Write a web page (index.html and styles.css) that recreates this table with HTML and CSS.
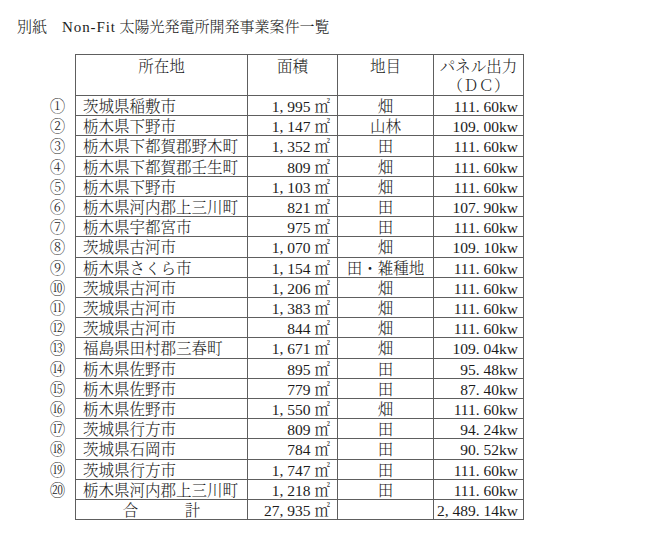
FILE: index.html
```html
<!DOCTYPE html>
<html lang="ja">
<head>
<meta charset="utf-8">
<title>別紙 Non-Fit 太陽光発電所開発事業案件一覧</title>
<link rel="stylesheet" href="styles.css">
</head>
<body>
<h1 class="title">別紙　<span class="latin">Non-Fit</span> 太陽光発電所開発事業案件一覧</h1>
<table class="list">
  <thead>
    <tr class="head">
      <th class="no"></th>
      <th class="loc">所在地</th>
      <th class="area">面積</th>
      <th class="cat">地目</th>
      <th class="pow">パネル出力<br>（ＤＣ）</th>
    </tr>
  </thead>
  <tbody>
    <tr><td class="no">①</td><td class="loc">茨城県稲敷市</td><td class="area">1<span class="c">,</span>995 ㎡</td><td class="cat">畑</td><td class="pow">111<span class="c">.</span>60kw</td></tr>
    <tr><td class="no">②</td><td class="loc">栃木県下野市</td><td class="area">1<span class="c">,</span>147 ㎡</td><td class="cat">山林</td><td class="pow">109<span class="c">.</span>00kw</td></tr>
    <tr><td class="no">③</td><td class="loc">栃木県下都賀郡野木町</td><td class="area">1<span class="c">,</span>352 ㎡</td><td class="cat">田</td><td class="pow">111<span class="c">.</span>60kw</td></tr>
    <tr><td class="no">④</td><td class="loc">栃木県下都賀郡壬生町</td><td class="area">809 ㎡</td><td class="cat">畑</td><td class="pow">111<span class="c">.</span>60kw</td></tr>
    <tr><td class="no">⑤</td><td class="loc">栃木県下野市</td><td class="area">1<span class="c">,</span>103 ㎡</td><td class="cat">畑</td><td class="pow">111<span class="c">.</span>60kw</td></tr>
    <tr><td class="no">⑥</td><td class="loc">栃木県河内郡上三川町</td><td class="area">821 ㎡</td><td class="cat">田</td><td class="pow">107<span class="c">.</span>90kw</td></tr>
    <tr><td class="no">⑦</td><td class="loc">栃木県宇都宮市</td><td class="area">975 ㎡</td><td class="cat">田</td><td class="pow">111<span class="c">.</span>60kw</td></tr>
    <tr><td class="no">⑧</td><td class="loc">茨城県古河市</td><td class="area">1<span class="c">,</span>070 ㎡</td><td class="cat">畑</td><td class="pow">109<span class="c">.</span>10kw</td></tr>
    <tr><td class="no">⑨</td><td class="loc">栃木県さくら市</td><td class="area">1<span class="c">,</span>154 ㎡</td><td class="cat">田・雑種地</td><td class="pow">111<span class="c">.</span>60kw</td></tr>
    <tr><td class="no">⑩</td><td class="loc">茨城県古河市</td><td class="area">1<span class="c">,</span>206 ㎡</td><td class="cat">畑</td><td class="pow">111<span class="c">.</span>60kw</td></tr>
    <tr><td class="no">⑪</td><td class="loc">茨城県古河市</td><td class="area">1<span class="c">,</span>383 ㎡</td><td class="cat">畑</td><td class="pow">111<span class="c">.</span>60kw</td></tr>
    <tr><td class="no">⑫</td><td class="loc">茨城県古河市</td><td class="area">844 ㎡</td><td class="cat">畑</td><td class="pow">111<span class="c">.</span>60kw</td></tr>
    <tr><td class="no">⑬</td><td class="loc">福島県田村郡三春町</td><td class="area">1<span class="c">,</span>671 ㎡</td><td class="cat">畑</td><td class="pow">109<span class="c">.</span>04kw</td></tr>
    <tr><td class="no">⑭</td><td class="loc">栃木県佐野市</td><td class="area">895 ㎡</td><td class="cat">田</td><td class="pow">95<span class="c">.</span>48kw</td></tr>
    <tr><td class="no">⑮</td><td class="loc">栃木県佐野市</td><td class="area">779 ㎡</td><td class="cat">田</td><td class="pow">87<span class="c">.</span>40kw</td></tr>
    <tr><td class="no">⑯</td><td class="loc">栃木県佐野市</td><td class="area">1<span class="c">,</span>550 ㎡</td><td class="cat">畑</td><td class="pow">111<span class="c">.</span>60kw</td></tr>
    <tr><td class="no">⑰</td><td class="loc">茨城県行方市</td><td class="area">809 ㎡</td><td class="cat">田</td><td class="pow">94<span class="c">.</span>24kw</td></tr>
    <tr><td class="no">⑱</td><td class="loc">茨城県石岡市</td><td class="area">784 ㎡</td><td class="cat">田</td><td class="pow">90<span class="c">.</span>52kw</td></tr>
    <tr><td class="no">⑲</td><td class="loc">茨城県行方市</td><td class="area">1<span class="c">,</span>747 ㎡</td><td class="cat">田</td><td class="pow">111<span class="c">.</span>60kw</td></tr>
    <tr><td class="no">⑳</td><td class="loc">栃木県河内郡上三川町</td><td class="area">1<span class="c">,</span>218 ㎡</td><td class="cat">田</td><td class="pow">111<span class="c">.</span>60kw</td></tr>
    <tr class="total"><td class="no"></td><td class="loc sum">合　　　計</td><td class="area">27<span class="c">,</span>935 ㎡</td><td class="cat"></td><td class="pow">2<span class="c">,</span>489<span class="c">.</span>14kw</td></tr>
  </tbody>
</table>
</body>
</html>
```
FILE: styles.css
```css
html, body {
  margin: 0;
  padding: 0;
  background: #ffffff;
}
body {
  color: #1c1c1c;
  font-family: "Liberation Serif", "Noto Serif CJK JP", "Noto Sans CJK JP", serif;
  font-weight: 300;
  width: 650px;
  height: 546px;
  overflow: hidden;
}
.title {
  margin: 0;
  padding: 17px 0 0 17px;
  font-size: 15px;
  font-weight: 300;
  line-height: 20px;
  height: 37px;
  box-sizing: border-box;
}
.latin {
  letter-spacing: 0.9px;
}
.list {
  margin: 17px 0 0 40px;
  border-collapse: collapse;
  font-size: 15.5px;
}
.list th, .list td {
  border: 1px solid #5e5e5e;
  padding: 0;
  font-weight: 300;
  white-space: nowrap;
}
.list th.no, .list td.no {
  border: none;
  width: 35px;
  text-align: center;
}
.head th {
  height: 36px;
  vertical-align: top;
  line-height: 19px;
  padding-top: 2px;
}
.list tbody td {
  height: 17.2px;
  line-height: 17.2px;
  padding-top: 2px;
}
.loc {
  width: 164px;
  text-align: left;
  padding-left: 7px !important;
}
th.loc, td.sum {
  text-align: center;
  padding-left: 0 !important;
}
.area {
  width: 82px;
  text-align: right;
  padding-right: 7px !important;
}
th.area { text-align: center; padding-right: 0 !important; }
.cat {
  width: 95px;
  text-align: center;
}
.pow {
  width: 84px;
  text-align: right;
  padding-right: 5px !important;
}
th.pow { text-align: center; padding-right: 0 !important; }
.c {
  letter-spacing: 0.25em;
}
```
